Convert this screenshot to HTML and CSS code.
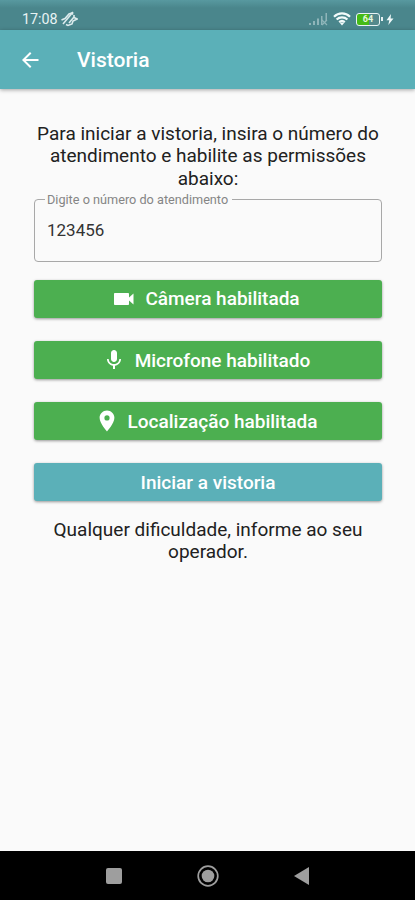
FILE: index.html
```
<!DOCTYPE html>
<html lang="pt-BR">
<head>
    <meta charset="UTF-8">
    <meta name="viewport" content="width=device-width, initial-scale=1.0">
    <title>Vistoria</title>
    <link rel="stylesheet" href="styles.css">
</head>
<body>

    <!-- Status bar -->
    <div class="status-bar">
        <span class="clock">17:08</span>
        <svg class="mute-icon" width="18" height="16" viewBox="0 0 18 16" fill="none" stroke="#dcebed" stroke-width="1.6">
            <path d="M1.500 9 5 7.500 9 3l3-1 1 1.500M6 13.500l2 1 4-1.500 1-3 4-2-3-1.500V4M9 12l5-6" />
            <path d="M13 1 3 13" />
        </svg>
        <div class="status-icons">
            <svg class="signal-icon" width="19" height="14" viewBox="0 0 19 14" fill="#8fb5b9">
                <path d="M0 11h2v2H0zM4 9h2v4H4zM8 6.500h2V13H8zM12 4h1.500v9H12zM16.500 1H18v8h-1.500z" />
                <path d="m13 8 5 5m0-5-5 5" stroke="#8fb5b9" stroke-width="1.200" />
            </svg>
            <svg class="wifi-icon" width="18" height="14" viewBox="0 0 18 14" fill="none" stroke="#f2fafa" stroke-width="2.2">
                <path d="M1 4.700a11.500 11.500 0 0 1 16 0M3.600 7.500a7.800 7.800 0 0 1 10.800 0M6.200 10.100a4.200 4.200 0 0 1 5.600 0" />
                <path d="m6.500 10.500 2.500 3 2.500-3z" fill="#f2fafa" stroke="none" />
            </svg>
            <div class="battery"><span class="battery-level">64</span></div>
            <svg class="bolt-icon" width="8" height="11" viewBox="0 0 8 11" fill="#eef8f8">
                <path d="M5 0 .5 6.300h2.800L2.300 11 7.500 4.500H4.600z" />
            </svg>
        </div>
    </div>

    <!-- App bar -->
    <header class="app-bar">
        <svg class="back-icon" width="24" height="24" viewBox="0 0 24 24" fill="#fff">
            <path d="M20.500 11H7.830l5.590-5.590L12 4l-8 8 8 8 1.410-1.410L7.830 13H20.500v-2z" />
        </svg>
        <h1>Vistoria</h1>
    </header>

    <main class="content">
        <p class="intro">Para iniciar a vistoria, insira o número do atendimento e habilite as permissões abaixo:</p>

        <form id="vistoriaForm">
            <fieldset class="field">
                <legend>Digite o número do atendimento</legend>
                <input type="text" id="atendimento" value="123456" aria-label="Digite o número do atendimento">
            </fieldset>

            <button type="button" class="btn btn-granted">
                <svg width="24" height="24" viewBox="0 0 24 24" fill="#fff">
                    <path d="M17 10.500V7c0-.55-.45-1-1-1H3c-.55 0-1 .45-1 1v10c0 .55.45 1 1 1h13c.55 0 1-.45 1-1v-3.500l4.500 4v-11l-4.500 4z" />
                </svg>
                <span>Câmera habilitada</span>
            </button>
            <button type="button" class="btn btn-granted">
                <svg width="24" height="24" viewBox="0 0 24 24" fill="#fff">
                    <path d="M12 14c1.660 0 3-1.340 3-3V5c0-1.660-1.340-3-3-3S9 3.340 9 5v6c0 1.660 1.340 3 3 3zm5.300-3c0 3-2.540 5.100-5.300 5.100S6.700 14 6.700 11H5c0 3.410 2.720 6.230 6 6.720V21h2v-3.280c3.280-.48 6-3.300 6-6.720h-1.700z" />
                </svg>
                <span>Microfone habilitado</span>
            </button>
            <button type="button" class="btn btn-granted">
                <svg width="24" height="24" viewBox="0 0 24 24" fill="#fff">
                    <path d="M12 1.500c-4.100 0-7.400 3.300-7.400 7.300C4.600 14.300 12 22.500 12 22.500s7.400-8.200 7.400-13.700c0-4-3.300-7.300-7.400-7.300zm0 10a2.600 2.600 0 1 1 0-5.200 2.600 2.600 0 0 1 0 5.200z" />
                </svg>
                <span>Localização habilitada</span>
            </button>
            <button type="submit" class="btn btn-start">Iniciar a vistoria</button>
        </form>

        <p class="help">Qualquer dificuldade, informe ao seu operador.</p>
    </main>

    <!-- Android navigation -->
    <nav class="nav-bar">
        <svg width="22" height="22" viewBox="0 0 22 22" fill="#9e9e9e">
            <rect x="3" y="3" width="16" height="16" rx="2" />
        </svg>
        <svg width="22" height="22" viewBox="0 0 22 22">
            <circle cx="11" cy="11" r="9.800" fill="none" stroke="#9e9e9e" stroke-width="1.700" />
            <circle cx="11" cy="11" r="6.300" fill="#9e9e9e" />
        </svg>
        <svg width="22" height="22" viewBox="0 0 22 22" fill="#9e9e9e">
            <path d="M3 11 18 2v18z" />
        </svg>
    </nav>

</body>
</html>
```

FILE: styles.css
```
/* Basic Reset */
* {
    margin: 0;
    padding: 0;
    box-sizing: border-box;
}

body {
    font-family: Roboto, sans-serif;
    background-color: #fafafa;
    color: #212121;
    height: 100vh;
    display: flex;
    flex-direction: column;
    overflow: hidden;
}

/* Status bar */
.status-bar {
    height: 30px;
    padding: 8px 21px 0 22px;
    background: linear-gradient(#5899a0, #4a868c 8px);
    display: flex;
    align-items: center;
    color: #e8f3f4;
}

.clock {
    font-size: 14.3px;
    line-height: 22px;
}

.mute-icon {
    margin-left: 2px;
}

.status-icons {
    display: flex;
    align-items: center;
    margin-left: auto;
}

.wifi-icon {
    margin: 0 5px;
}

.battery {
    width: 24px;
    height: 13px;
    border: 1.5px solid #e8f3f4;
    border-radius: 3px;
    background: linear-gradient(90deg, #45bb16 55%, #55898c 55%);
    position: relative;
    text-align: center;
}

/* battery tip */
.battery::after {
    content: "";
    position: absolute;
    right: -4px;
    top: 3px;
    width: 2px;
    height: 4px;
    background-color: #e8f3f4;
}

.battery-level {
    display: block;
    font-size: 9px;
    font-weight: bold;
    line-height: 11px;
    color: #e6f7dc;
}

.bolt-icon {
    margin-left: 6px;
}

/* App bar */
.app-bar {
    height: 59px;
    padding: 0 18px;
    background-color: #5bb0b8;
    box-shadow: 0 1px 4px rgba(0, 0, 0, 0.35);
    display: flex;
    align-items: center;
    gap: 35px;
}

h1 {
    color: #fff;
    font-size: 21px;
    font-weight: 500;
}

/* Page content */
.content {
    flex: 1;
    padding: 34px 33px 0 34px;
}

.intro,
.help {
    font-size: 19px;
    line-height: 22.3px;
    text-align: center;
}

.intro {
    margin-bottom: 3px;
}

form {
    display: flex;
    flex-direction: column;
}

.field {
    height: 69px;
    margin-bottom: 18px;
    padding: 0 10px;
    border: 1px solid #a8a8a8;
    border-radius: 4px;
}

.field legend {
    padding: 0 4px 0 2px;
    font-size: 12.7px;
    line-height: 14px;
    color: #858585;
}

.field input {
    width: 100%;
    height: 46px;
    padding-left: 2px;
    border: none;
    outline: none;
    background: none;
    font-family: inherit;
    font-size: 17px;
    color: #333;
}

/* Buttons */
.btn {
    height: 38px;
    margin-bottom: 23.2px;
    border: none;
    border-radius: 3px;
    box-shadow: 0 1px 3px rgba(0, 0, 0, 0.4);
    display: flex;
    justify-content: center;
    align-items: center;
    gap: 9px;
    font-family: inherit;
    font-size: 19px;
    font-weight: 500;
    color: #fff;
    cursor: pointer;
}

.btn-granted {
    padding-right: 4px;
    background-color: #4caf50;
}

.btn-start {
    margin-bottom: 17.5px;
    background-color: #5bb0b8;
}

/* Navigation bar */
.nav-bar {
    height: 49px;
    background-color: #000;
    display: flex;
    justify-content: center;
    align-items: center;
    gap: 72px;
}
```
